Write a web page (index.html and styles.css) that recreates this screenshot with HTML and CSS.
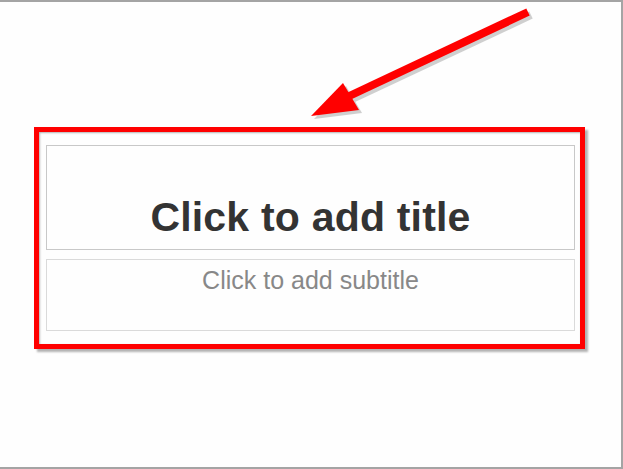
FILE: index.html
```html
<!DOCTYPE html>
<html lang="en">
<head>
    <meta charset="UTF-8">
    <title>Click to add title</title>
    <link rel="stylesheet" href="styles.css">
</head>
<body>
    <div class="slide">
        <!-- Стрелка-указатель -->
        <svg class="arrow" width="623" height="130" viewBox="0 0 623 130">
            <g transform="translate(3,3)" fill="#b0b0b0" stroke="#b0b0b0" opacity="0.6">
                <line x1="528" y1="10" x2="345" y2="96" stroke-width="8"/>
                <polygon points="311,114 343,81 359,108" stroke="none"/>
            </g>
            <line x1="528" y1="10" x2="345" y2="96" stroke="#ff0000" stroke-width="8"/>
            <polygon points="311,114 343,81 359,108" fill="#ff0000"/>
        </svg>

        <div class="highlight">
            <div class="placeholder title-box">
                <span class="title">Click to add title</span>
            </div>
            <div class="placeholder subtitle-box">
                <span class="subtitle">Click to add subtitle</span>
            </div>
        </div>
    </div>
</body>
</html>
```

FILE: styles.css
```css
body {
    margin: 0;
    font-family: "Liberation Sans", Arial, sans-serif;
    background-color: #fff;
}

.slide {
    position: relative;
    box-sizing: border-box;
    width: 623px;
    height: 469px;
    padding: 125px 0 0 34px;
    background-color: #fefefe;
    border-top: 2px solid #a4a4a4;
    border-right: 2px solid #a4a4a4;
    border-bottom: 2px solid #a4a4a4;
}

.arrow {
    position: absolute;
    left: 0;
    top: 0;
}

/* Красная рамка вокруг заголовков */
.highlight {
    box-sizing: border-box;
    width: 551px;
    height: 222px;
    padding: 13px 5px 13px 7px;
    border: 5px solid #ff0000;
    box-shadow: 3px 3px 2px rgba(0,0,0,0.3), inset 1px 1px 2px rgba(0,0,0,0.3);
    display: flex;
    flex-direction: column;
    gap: 9px;
}

.placeholder {
    box-sizing: border-box;
    display: flex;
    flex-direction: column;
    align-items: center;
}

.title-box {
    height: 105px;
    border: 1px solid #c8c8c8;
    justify-content: flex-end;
    padding-bottom: 11px;
}

.subtitle-box {
    height: 72px;
    border: 1px solid #dadada;
    padding-top: 8px;
}

.title {
    font-size: 41px;
    font-weight: bold;
    letter-spacing: 0.2px;
    color: #333;
    line-height: 1;
}

.subtitle {
    font-size: 25px;
    color: #888;
    line-height: 1;
}
```
